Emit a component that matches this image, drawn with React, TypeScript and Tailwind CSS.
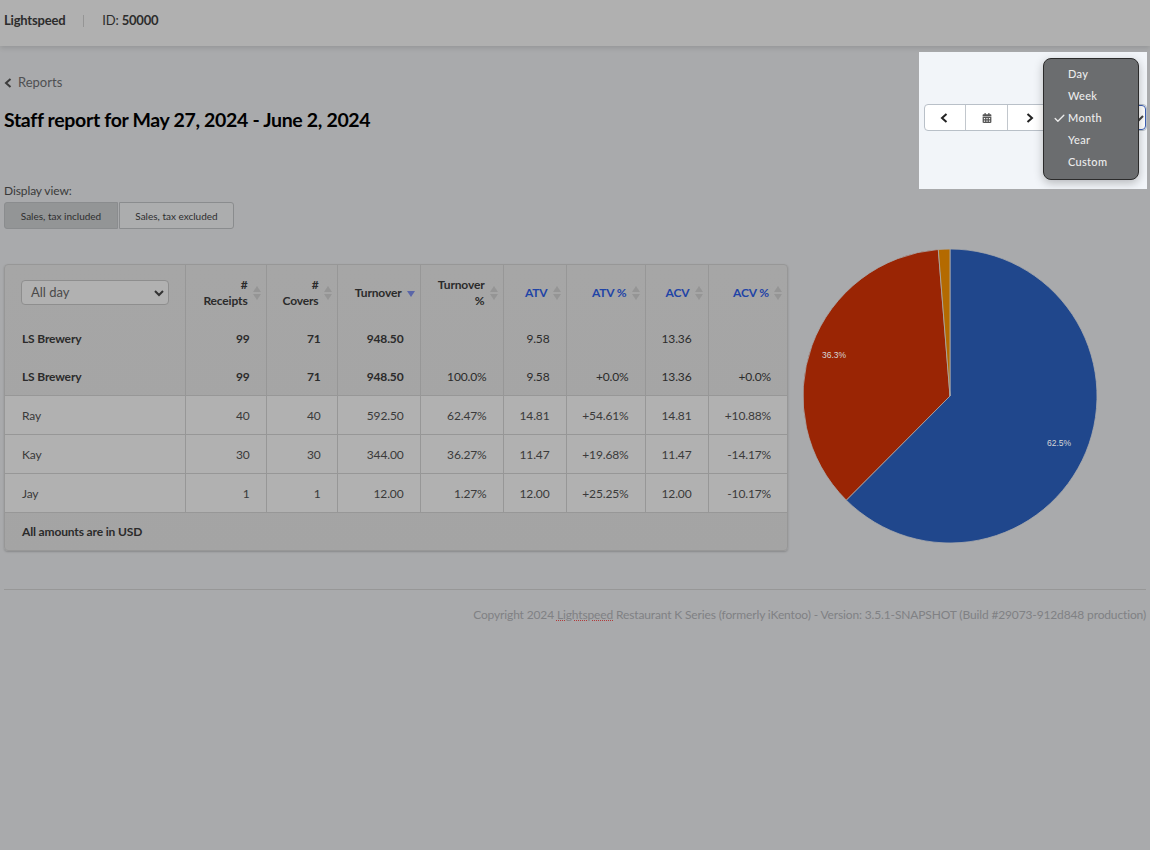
import { Check } from 'lucide-react'
import { FaCalendarAlt } from 'react-icons/fa'

type Row = { name: string; cells: string[]; height: string; pad?: boolean }

const totals: Row[] = [
  { name: 'LS Brewery', height: 'h-[38px]', cells: ['99', '71', '948.50', '', '9.58', '', '13.36', ''] },
  { name: 'LS Brewery', height: 'h-[37px]', pad: true, cells: ['99', '71', '948.50', '100.0%', '9.58', '+0.0%', '13.36', '+0.0%'] },
]

const staff: Row[] = [
  { name: 'Ray', height: 'h-[39px]', pad: true, cells: ['40', '40', '592.50', '62.47%', '14.81', '+54.61%', '14.81', '+10.88%'] },
  { name: 'Kay', height: 'h-[39px]', pad: true, cells: ['30', '30', '344.00', '36.27%', '11.47', '+19.68%', '11.47', '-14.17%'] },
  { name: 'Jay', height: 'h-[39px]', pad: true, cells: ['1', '1', '12.00', '1.27%', '12.00', '+25.25%', '12.00', '-10.17%'] },
]

const columns = [
  { label: ['#', 'Receipts'], blue: false, width: 'w-[81px]' },
  { label: ['#', 'Covers'], blue: false, width: 'w-[71px]' },
  { label: ['Turnover'], blue: false, width: 'w-[83px]', sorted: true },
  { label: ['Turnover', '%'], blue: false, width: 'w-[83px]' },
  { label: ['ATV'], blue: true, width: 'w-[63px]' },
  { label: ['ATV %'], blue: true, width: 'w-[79px]' },
  { label: ['ACV'], blue: true, width: 'w-[63px]' },
  { label: ['ACV %'], blue: true, width: 'w-[79px]' },
]

function Chevron({ dir, className }: { dir: 'left' | 'right' | 'down'; className?: string }) {
  const d = dir === 'left' ? 'M6.5 1L2 5l4.5 4' : dir === 'right' ? 'M3.5 1L8 5 3.5 9' : 'M1 3l4 4 4-4'
  return (
    <svg width="10" height="10" viewBox="0 0 10 10" className={className}>
      <path d={d} fill="none" stroke="currentColor" strokeWidth="2" />
    </svg>
  )
}

function SortIcon({ sorted }: { sorted?: boolean }) {
  if (sorted) {
    return (
      <svg width="8" height="14" viewBox="0 0 8 14" className="flex-shrink-0">
        <path d="M0 5h8l-4 6z" fill="#5a66a8" />
      </svg>
    )
  }
  return (
    <svg width="8" height="14" viewBox="0 0 8 14" className="flex-shrink-0">
      <path d="M4 0l4 6H0z" fill="#959595" />
      <path d="M0 8h8l-4 6z" fill="#959595" />
    </svg>
  )
}

function polar(angle: number) {
  const r = (angle * Math.PI) / 180
  return `${148 + 147 * Math.sin(r)} ${148 - 147 * Math.cos(r)}`
}

function slice(from: number, to: number) {
  const large = to - from > 50 ? 1 : 0
  return `M148 148L${polar((from / 100) * 360)}A147 147 0 ${large} 1 ${polar((to / 100) * 360)}Z`
}

function Pie() {
  return (
    <svg width="296" height="296" viewBox="0 0 296 296">
      <path d={slice(0, 62.47)} fill="#20478c" stroke="#aaabad" strokeWidth="0.8" />
      <path d={slice(62.47, 98.73)} fill="#9a2504" stroke="#aaabad" strokeWidth="0.8" />
      <path d={slice(98.73, 100)} fill="#b46a00" stroke="#aaabad" strokeWidth="0.8" />
      <text x="20" y="110" fontSize="8.5" fontFamily="Liberation Sans, sans-serif" fill="#d6d6d6">36.3%</text>
      <text x="245" y="198" fontSize="8.5" fontFamily="Liberation Sans, sans-serif" fill="#d6d6d6">62.5%</text>
    </svg>
  )
}

function DataRow({ row, bold, light, rule }: { row: Row; bold?: boolean; light?: boolean; rule?: boolean }) {
  const pad = row.pad ? 'pt-[2px]' : ''
  return (
    <tr className={`${row.height} ${light ? 'bg-[#b1b1b1]' : ''} ${light || rule ? 'border-b border-[#979797]' : ''}`}>
      <td className={`pl-[17px] border-r border-[#979797] ${pad} ${bold ? 'font-bold text-[#2b2b2b]' : ''}`}>{row.name}</td>
      {row.cells.map((c, i) => (
        <td key={i} className={`pr-[16px] text-right border-r border-[#979797] last:border-r-0 ${pad} ${bold ? 'text-[#2b2b2b]' : ''} ${bold && i < 3 ? 'font-bold' : ''}`}>
          {c}
        </td>
      ))}
    </tr>
  )
}

export default function App() {
  return (
    <div className="relative min-h-[850px] bg-[#a9aaac] font-['Lato',sans-serif] text-[#333]">
      <div className="flex h-[46px] items-center bg-[#b0b0b0] pb-[4px] pl-[4px] text-[13px] tracking-[-0.2px] text-[#2c2c2c] shadow-[0_2px_5px_rgba(0,0,0,0.12)]">
        <span className="font-bold">Lightspeed</span>
        <span className="ml-[18px] mr-[18px] h-[12px] w-px bg-[#959595]" />
        <span>ID: <span className="font-bold">50000</span></span>
      </div>

      <div className="px-[4px]">
        <div className="mt-[28px] flex h-[18px] items-center gap-[4px] text-[13px] text-[#4f5052]">
          <Chevron dir="left" className="text-[#3c3c3c]" />
          Reports
        </div>
        <h1 className="mt-[14px] h-[28px] text-[19.5px] font-bold leading-[28px] tracking-[-0.33px] text-black">
          Staff report for May 27, 2024 - June 2, 2024
        </h1>

        <div className="mt-[48px] text-[12px] leading-[18px] tracking-[-0.1px] text-[#3a3a3a]">Display view:</div>
        <div className="mt-[2px] flex gap-px">
          <div className="flex h-[27px] w-[114px] items-center justify-center rounded-l-[3px] border border-[#8a8c8e] bg-[#939596] pt-px text-[10px] text-[#2e2e2e]">
            Sales, tax included
          </div>
          <div className="flex h-[27px] w-[115px] items-center justify-center rounded-r-[3px] border border-[#8a8c8e] bg-[#acadae] pt-px text-[10px] text-[#2e2e2e]">
            Sales, tax excluded
          </div>
        </div>

        <div className="mt-[35px] flex items-start">
          <div className="w-[784px] overflow-hidden rounded-[4px] border border-[#979797] bg-gradient-to-b from-[#a6a6a6] to-[#a4a4a4] text-[12px] tracking-[-0.15px] shadow-[0_1px_2px_rgba(0,0,0,0.2)]">
            <table className="w-full table-fixed border-collapse text-[#3a3a3a]">
              <thead>
                <tr className="h-[55px]">
                  <th className="w-[180px] border-r border-[#979797] px-[16px] font-normal">
                    <div className="flex h-[25px] items-center justify-between rounded-[4px] border border-[#8e8e8e] bg-[#b1b1b1] pl-[9px] pr-[4px] text-[13px] tracking-normal text-[#4a4a4a]">
                      All day
                      <Chevron dir="down" className="text-[#333]" />
                    </div>
                  </th>
                  {columns.map((col, i) => (
                    <th key={i} className={`${col.width} border-r border-[#979797] pr-[5px] last:border-r-0`}>
                      <div className={`flex items-center justify-end gap-[5px] text-right leading-[16px] font-bold ${col.blue ? 'text-[#1f44a6]' : 'text-[#2b2b2b]'}`}>
                        <div>
                          {col.label.map(l => (
                            <div key={l}>{l}</div>
                          ))}
                        </div>
                        <SortIcon sorted={col.sorted} />
                      </div>
                    </th>
                  ))}
                </tr>
              </thead>
              <tbody>
                {totals.map((r, i) => (
                  <DataRow key={i} row={r} bold rule={i === 1} />
                ))}
                {staff.map(r => (
                  <DataRow key={r.name} row={r} light />
                ))}
              </tbody>
            </table>
            <div className="flex h-[37px] items-center pl-[17px] pt-[2px] font-bold text-[#2b2b2b]">All amounts are in USD</div>
          </div>
          <div className="ml-[14px] mt-[-16px]">
            <Pie />
          </div>
        </div>

        <div className="mt-[38px] border-t border-[#979797]" />
        <div className="mt-[16px] text-right text-[12px] leading-[18px] tracking-[-0.14px] text-[#808184]">
          Copyright 2024 <span className="underline decoration-dotted decoration-[#b03a3a]">Lightspeed</span> Restaurant K Series (formerly iKentoo) - Version: 3.5.1-SNAPSHOT (Build #29073-912d848 production)
        </div>
      </div>

      {/* highlighted range picker */}
      <div className="absolute left-[919px] top-[52px] h-[137px] w-[228px] overflow-hidden bg-[#f2f5f9]">
        <div className="absolute left-[5px] top-[52px] flex h-[27px] w-[223px] rounded-[4px] border border-[#b9c0c8] bg-white text-[#222]">
          <div className="flex w-[41px] items-center justify-center border-r border-[#c2c7cd]">
            <Chevron dir="left" />
          </div>
          <div className="flex w-[42px] items-center justify-center border-r border-[#c2c7cd]">
            <FaCalendarAlt className="text-[10px] text-[#555]" />
          </div>
          <div className="flex w-[41px] items-center justify-center">
            <Chevron dir="right" />
          </div>
          <div className="flex flex-1 items-center justify-end rounded-r-[4px] border border-[#3d5fb4] pr-[1px]">
            <Chevron dir="down" className="text-[#444]" />
          </div>
        </div>
        <div className="absolute left-[124px] top-[6px] h-[122px] w-[96px] rounded-[8px] border border-[#2b2b2b] bg-[#6b6d6f] py-[4px] text-[11px] font-medium tracking-[0.3px] text-[#ececec] shadow-[0_3px_10px_rgba(0,0,0,0.25)]">
          {['Day', 'Week', 'Month', 'Year', 'Custom'].map(item => (
            <div key={item} className="flex h-[22px] items-center">
              <span className="flex w-[24px] justify-end pr-[2px]">
                {item === 'Month' && <Check size={13} strokeWidth={2.5} />}
              </span>
              {item}
            </div>
          ))}
        </div>
      </div>
    </div>
  )
}
